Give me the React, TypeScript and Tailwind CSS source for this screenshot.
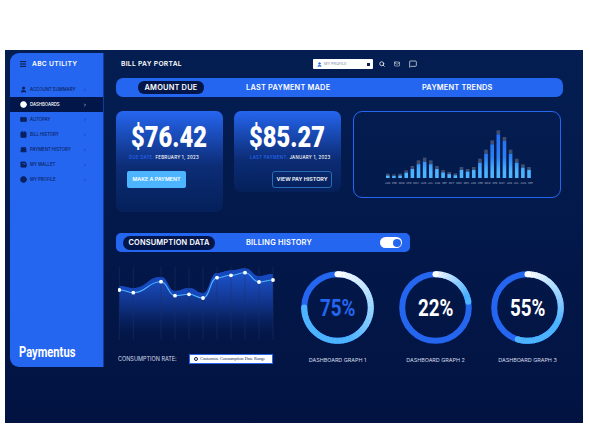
import React from "react";
import { Menu, User, Circle, CreditCard, CalendarDays, Laptop, Wallet, ChevronRight, Search, Mail, MessageSquare } from "lucide-react";

const nav = [
  { label: "ACCOUNT SUMMARY", Icon: User },
  { label: "DASHBOARDS", Icon: Circle, active: true },
  { label: "AUTOPAY", Icon: CreditCard },
  { label: "BILL HISTORY", Icon: CalendarDays },
  { label: "PAYMENT HISTORY", Icon: Laptop },
  { label: "MY WALLET", Icon: Wallet },
  { label: "MY PROFILE", Icon: Circle },
];

const bars = [160, 162, 160, 150, 137, 120, 112, 120, 137, 149, 155, 159, 140, 146, 140, 115, 88, 60, 30, 50, 88, 115, 132, 140].map((y) => (173 - y) / 3);
const months = "JAN FEB MAR APR MAY JUN JUL AUG SEP OCT NOV DEC JAN FEB MAR APR MAY JUN JUL AUG SEP".split(" ");

function BarChart() {
  const w = 148;
  const h = 52;
  return (
    <svg width={w} height={h} viewBox={`0 0 ${w} ${h}`} className="block">
      <defs>
        <linearGradient id="barFill" x1="0" y1="0" x2="0" y2={h} gradientUnits="userSpaceOnUse">
          <stop offset="0" stopColor="#2566f0" />
          <stop offset="0.6" stopColor="#2a80f4" />
          <stop offset="0.88" stopColor="#4db5ff" />
          <stop offset="1" stopColor="#4db5ff" />
        </linearGradient>
      </defs>
      {bars.map((v, i) => {
        const x = 1 + i * 6.14;
        const cap = Math.min(4, 1.2 + v * 0.15);
        return (
          <g key={i}>
            <rect x={x} y={h - v} width={3.6} height={cap} fill="#3f4e6e" />
            <rect x={x} y={h - v + cap} width={3.6} height={Math.max(v - cap, 0)} fill="url(#barFill)" />
          </g>
        );
      })}
    </svg>
  );
}

const pts: [number, number][] = [[1.3, 24], [15.3, 26.7], [43, 15.7], [57, 29.7], [71, 28.3], [85, 32], [99, 11.7], [113, 9.3], [127, 6.7], [141, 16], [155, 14]];

function smooth(p: [number, number][]) {
  let d = `M${p[0][0]} ${p[0][1]}`;
  for (let i = 1; i < p.length; i++) {
    const [x0, y0] = p[i - 1];
    const [x1, y1] = p[i];
    const m = (x0 + x1) / 2;
    d += ` C${m} ${y0} ${m} ${y1} ${x1} ${y1}`;
  }
  return d;
}

function LineChart() {
  const line = smooth(pts);
  const upper: [number, number][] = [[1.3, 20], [15.3, 22], [43, 11], [57, 25], [71, 22], [85, 27], [99, 7], [113, 4.5], [127, 2.5], [141, 10], [155, 8]];
  const up = smooth(upper);
  const band = `${up} L155 14 ${smooth([...pts].reverse()).replace(/^M\S+ \S+/, "")} Z`;
  return (
    <svg width={157} height={75} viewBox="0 0 157 75" className="block">
      <defs>
        <linearGradient id="areaFill" x1="0" y1="0" x2="0" y2="1">
          <stop offset="0" stopColor="#1f57d6" />
          <stop offset="0.55" stopColor="#0e2f80" />
          <stop offset="1" stopColor="#031545" stopOpacity="0.2" />
        </linearGradient>
      </defs>
      <path d={`${up} L155 74 L1.3 74 Z`} fill="url(#areaFill)" />
      <path d={band} fill="#1547bd" />
      {pts.map(([x]) => (
        <line key={x} x1={x} x2={x} y1={1} y2={74} stroke="#1f3268" strokeWidth={0.5} />
      ))}
      <path d={line} fill="none" stroke="#4db5ff" strokeWidth={1.1} />
      {pts.map(([x, y]) => (
        <circle key={x} cx={x} cy={y} r={1.9} fill="#ffffff" />
      ))}
    </svg>
  );
}

function mix(a: number[], b: number[], t: number) {
  return `rgb(${a.map((v, i) => Math.round(v + (b[i] - v) * t)).join(",")})`;
}

function Ring({ pct, endDeg, textClass }: { pct: string; endDeg: number; textClass: string }) {
  const r = 33.3;
  const c = 36.5;
  const pos = (deg: number) => {
    const a = ((deg - 90) * Math.PI) / 180;
    return [c + r * Math.cos(a), c + r * Math.sin(a)];
  };
  const N = 60;
  const segs = [];
  for (let i = 0; i < N; i++) {
    const [x0, y0] = pos((endDeg * i) / N - 0.3);
    const [x1, y1] = pos((endDeg * (i + 1)) / N + 0.3);
    segs.push(
      <path key={i} d={`M${x0} ${y0} A${r} ${r} 0 0 1 ${x1} ${y1}`} fill="none" strokeWidth={6}
        stroke={mix([255, 255, 255], [77, 181, 255], Math.min((i / N) * (endDeg > 150 ? 1.7 : 1.15), 1))} />
    );
  }
  const [ex, ey] = pos(endDeg);
  const [sx, sy] = pos(0);
  return (
    <div className="relative h-[73px] w-[73px]">
      <svg width={73} height={73} viewBox="0 0 73 73" className="block">
        <circle cx={c} cy={c} r={r} fill="none" stroke="#2566f0" strokeWidth={6} />
        {segs}
        <circle cx={sx} cy={sy} r={3} fill="#ffffff" />
        <circle cx={ex} cy={ey} r={3} fill="#4db5ff" />
      </svg>
      <div className={`absolute inset-0 flex items-center justify-center font-['Roboto',sans-serif] text-[24px] font-bold ${textClass}`}>
        <span className="inline-block scale-x-[0.78]">{pct}</span>
      </div>
    </div>
  );
}

export default function App() {
  return (
    <div className="h-[440px] w-[590px] overflow-hidden bg-white pl-[5px] pt-[50px] font-['Inter',sans-serif] text-white">
      <div className="flex h-[373px] w-[578px] bg-gradient-to-b from-[#041e52] to-[#021342]">
        <aside className="ml-[5px] mt-[3px] flex h-[314px] w-[94px] shrink-0 flex-col rounded-l-[9px] border-r border-[#123b9a] bg-[#2566f0]">
          <div className="flex h-[22px] items-center pl-[9px]">
            <Menu size={8} strokeWidth={3} className="text-[#04143f]" />
            <span className="ml-[5px] mt-[1px] text-[6.7px] font-semibold tracking-[0.3px]">ABC UTILITY</span>
          </div>
          <nav className="mt-[7px] flex flex-col">
            {nav.map(({ label, Icon, active }) => (
              <div key={label} className={`flex h-[15px] items-center pl-[6px] ${active ? "bg-[#03164a] text-white" : "text-[#0a2260]"}`}>
                <span className="flex w-[14px] justify-center">
                  <Icon size={7} strokeWidth={2.6} fill={active ? "#ffffff" : "#0a2260"} />
                </span>
                <span className="mt-[2px] w-[53px] whitespace-nowrap text-[4.3px] font-medium">{label}</span>
                <ChevronRight size={4} strokeWidth={3} className={active ? "text-white" : "text-[#0f3594]"} />
              </div>
            ))}
          </nav>
          <div className="mt-auto pb-[6px] pl-[9px] font-['Roboto',sans-serif] text-[14.5px] font-bold leading-[17px]">
            <span className="inline-block origin-left scale-x-[0.77]">Paymentus</span>
          </div>
        </aside>

        <main className="flex-1 pl-[12px]">
          <header className="flex h-[28px] items-center">
            <span className="ml-[5px] mt-[1px] w-[192px] text-[6.7px] font-semibold tracking-[0.3px]">BILL PAY PORTAL</span>
            <div className="flex h-[10px] w-[60px] items-center rounded-[1px] bg-white pl-[4px] pr-[3px]">
              <User size={5} strokeWidth={3} fill="#2566f0" className="text-[#2566f0]" />
              <span className="ml-[2px] flex-1 text-[3.8px] text-[#7a869f]">MY PROFILE</span>
              <span className="h-[3px] w-[3px] bg-[#0a1f55]" />
            </div>
            <Search size={6} strokeWidth={3} className="ml-[6px]" />
            <Mail size={6} strokeWidth={2} className="ml-[9px]" />
            <MessageSquare size={8} strokeWidth={2} className="ml-[9px]" />
          </header>

          <div className="flex h-[19px] w-[447px] items-center rounded-[7px] bg-[#2566f0] text-[7.4px] font-semibold tracking-[0.2px]">
            <span className="ml-[22px] flex h-[13px] w-[66px] items-center justify-center rounded-[6px] bg-[#03164a]">AMOUNT DUE</span>
            <span className="ml-[42px] w-[80px] whitespace-nowrap text-center">LAST PAYMENT MADE</span>
            <span className="ml-[96px] w-[68px] whitespace-nowrap text-center">PAYMENT TRENDS</span>
          </div>

          <section className="mt-[14px] flex h-[101px] items-start">
            <div className="flex h-[101px] w-[107px] flex-col rounded-[7px] bg-gradient-to-b from-[#2566f0] via-[#0c2c75] via-55% to-[#05205a]">
              <div className="mt-[10px] text-center font-['Roboto',sans-serif] text-[30px] font-black leading-[32px]">
                <span className="inline-block scale-x-[0.79]">$76.42</span>
              </div>
              <div className="ml-[13px] mt-[2px] whitespace-nowrap text-[4.3px] font-medium leading-[6px] tracking-[0.3px]">
                <span className="text-[#2566f0]">DUE DATE: </span>FEBRUARY 1, 2023
              </div>
              <div className="ml-[11px] mt-[10px] flex h-[17px] w-[59px] items-center justify-center rounded-[2px] bg-[#4db5ff] text-[5.3px] font-semibold">MAKE A PAYMENT</div>
            </div>
            <div className="ml-[11px] flex h-[81px] w-[107px] flex-col rounded-[7px] bg-gradient-to-b from-[#2566f0] via-[#0c2c75] via-60% to-[#05205a]">
              <div className="mt-[10px] text-center font-['Roboto',sans-serif] text-[30px] font-black leading-[32px]">
                <span className="inline-block scale-x-[0.79]">$85.27</span>
              </div>
              <div className="ml-[16px] mt-[2px] whitespace-nowrap text-[4.3px] font-medium leading-[6px] tracking-[0.3px]">
                <span className="text-[#2566f0]">LAST PAYMENT: </span>JANUARY 1, 2023
              </div>
              <div className="ml-[38px] mt-[10px] flex h-[17px] w-[60px] items-center justify-center rounded-[3px] border border-[#2a6cb8] text-[5.4px] font-semibold">VIEW PAY HISTORY</div>
            </div>
            <div className="ml-[12px] flex h-[87px] w-[208px] flex-col items-start rounded-[9px] border border-[#2566f0] pl-[31px] pt-[14px]">
              <BarChart />
              <div className="mt-[3px] flex w-[148px] justify-between text-[2.6px] leading-[4px] text-[#aab4c8]">
                {months.map((m, i) => <span key={i}>{m}</span>)}
              </div>
            </div>
          </section>

          <div className="mt-[21px] flex h-[19px] w-[294px] items-center rounded-[5px] bg-[#2566f0] text-[7.4px] font-semibold tracking-[0.2px]">
            <span className="ml-[7px] flex h-[14px] w-[92px] items-center justify-center rounded-[7px] bg-[#03164a]">CONSUMPTION DATA</span>
            <span className="ml-[31px] w-[64px] whitespace-nowrap text-center">BILLING HISTORY</span>
            <span className="ml-[70px] flex h-[11px] w-[22px] items-center justify-end rounded-full bg-white pr-[1.5px]">
              <span className="h-[8px] w-[8px] rounded-full bg-[#2566f0]" />
            </span>
          </div>

          <section className="mt-[14px] flex items-start">
            <div className="ml-[2px] w-[157px]">
              <LineChart />
              <div className="mt-[13px] flex h-[10px] items-center">
                <span className="mt-[1px] w-[71px] whitespace-nowrap text-[5.5px] text-[#d5dbe8]">CONSUMPTION RATE:</span>
                <div className="flex h-[10px] w-[84px] items-center border border-[#2566f0] bg-white pl-[4px]">
                  <span className="h-[4px] w-[4px] rounded-full border border-[#0a1f55]" />
                  <span className="ml-[2px] whitespace-nowrap font-['Liberation_Serif',serif] text-[4.4px] text-[#0a1f55]">Customize Consumption Date Range</span>
                </div>
              </div>
            </div>
            <div className="ml-[26px] mt-[5px] flex w-[73px] flex-col items-center">
              <Ring pct="75%" endDeg={270} textClass="text-[#2566f0]" />
              <span className="mt-[12px] whitespace-nowrap text-[5.4px] text-[#d5dbe8]">DASHBOARD GRAPH 1</span>
            </div>
            <div className="ml-[25px] mt-[5px] flex w-[73px] flex-col items-center">
              <Ring pct="22%" endDeg={80} textClass="text-white" />
              <span className="mt-[12px] whitespace-nowrap text-[5.4px] text-[#d5dbe8]">DASHBOARD GRAPH 2</span>
            </div>
            <div className="ml-[19px] mt-[5px] flex w-[73px] flex-col items-center">
              <Ring pct="55%" endDeg={197} textClass="text-white" />
              <span className="mt-[12px] whitespace-nowrap text-[5.4px] text-[#d5dbe8]">DASHBOARD GRAPH 3</span>
            </div>
          </section>
        </main>
      </div>
    </div>
  );
}
